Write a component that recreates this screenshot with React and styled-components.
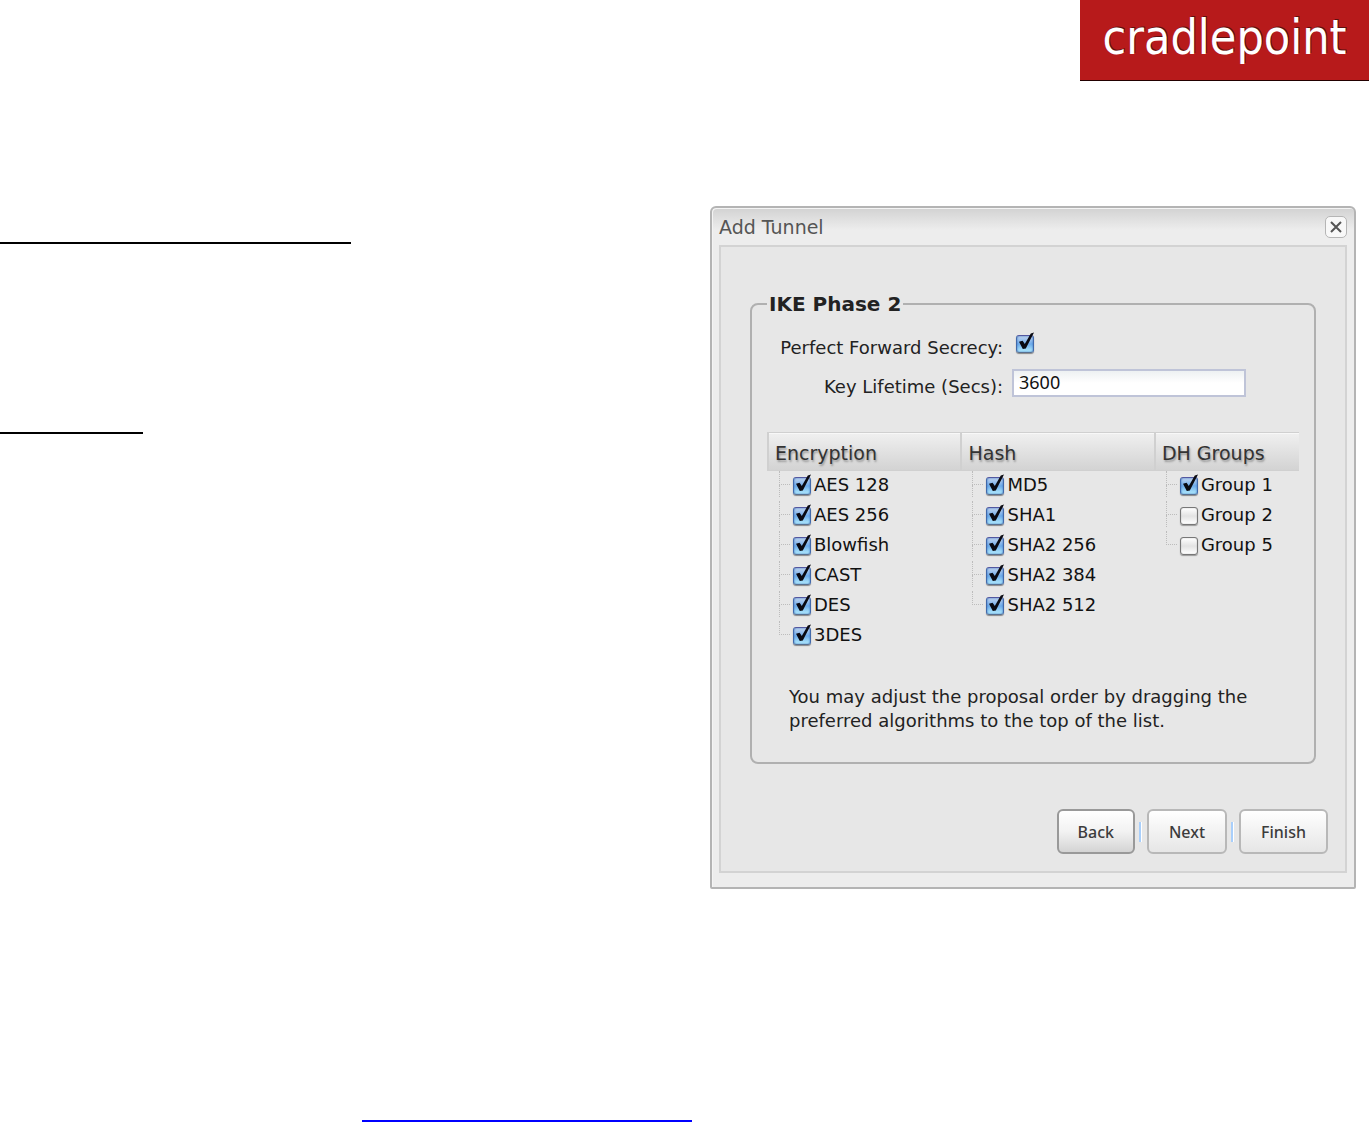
import React from "react"
import styled, { createGlobalStyle } from "styled-components"

const GlobalStyle = createGlobalStyle`
  *, *::before, *::after {
    box-sizing: border-box;
  }

  body {
    margin: 0;
    background: #fff;
    font-family: "DejaVu Sans", Verdana, sans-serif;
    font-size: 18px;
    line-height: 24px;
    color: #222;
  }
`

const Page = styled.div`
  display: flex;
  flex-direction: column;
  min-height: 100vh;
`

const Header = styled.header`
  display: flex;
  justify-content: flex-end;
`

const Logo = styled.div`
  width: 289px;
  height: 81px;
  border-bottom: 1px solid #200;
  background: #b71a1b;
  color: #fff;
  font-family: "DejaVu Sans Condensed", "DejaVu Sans", sans-serif;
  font-stretch: condensed;
  font-size: 48px;
  line-height: 74px;
  text-align: center;
  text-shadow: 1px -1px 0 #5c1010;
`

const Main = styled.main`
  display: grid;
  grid-template-columns: 1fr minmax(0, 646px);
  align-items: start;
  padding: 125px 13px 0 0;
`

const Outline = styled.div`
  display: flex;
  flex-direction: column;
  gap: 188px;
  padding-top: 36px;
`

const Rule = styled.div`
  width: ${(p) => p.$width};
  height: 2px;
  background: #000;
`

const Footer = styled.footer`
  display: flex;
  margin-top: auto;
  padding-left: 362px;
`

const FooterLink = styled.a`
  width: 330px;
  border-bottom: 2px solid #00f;
`

const Dialog = styled.section`
  padding: 0 7px 14px;
  border: 2px solid #b4b4b4;
  border-radius: 6px 6px 2px 2px;
  background: linear-gradient(#d2d2d2, #ededed 22px);
  box-shadow: inset 1px 1px 0 #f4f4f4;
`

const TitleBar = styled.div`
  display: flex;
  align-items: center;
  justify-content: space-between;
  height: 37px;

  h1 {
    margin: 0;
    font-size: 19px;
    font-weight: 400;
    color: #555;
  }
`

const CloseButton = styled.button`
  display: flex;
  align-items: center;
  justify-content: center;
  width: 22px;
  height: 22px;
  padding: 0;
  border: 1px solid #b5b5b5;
  border-radius: 5px;
  background: #f8f8f8;
`

const Panel = styled.form`
  padding: 46px 29px 17px;
  border: 2px solid #d3d3d3;
  background: #e7e7e7;
`

const Group = styled.fieldset`
  min-width: 0;
  margin: 0;
  padding: 13px 15px 29px;
  border: 2px solid #b0b0b0;
  border-radius: 8px;

  legend {
    padding: 0 2px;
    font-size: 20px;
    font-weight: 700;
    line-height: 22px;
  }
`

const Field = styled.div`
  display: grid;
  grid-template-columns: 236px 234px;
  column-gap: 9px;
  align-items: center;
  height: 39px;

  label {
    text-align: right;
    white-space: nowrap;
  }
`

const Control = styled.div`
  display: flex;
  padding: 0 0 8px ${(p) => p.$indent || "0"};
`

const TextInput = styled.input`
  width: 100%;
  height: 28px;
  padding: 0 5px 2px;
  border: 2px solid #bfc4d8;
  background: linear-gradient(#edf1f2, #fff 12px);
  color: #111;
  font-family: "Noto Sans", sans-serif;
  font-size: 18px;
`

const Columns = styled.div`
  display: grid;
  grid-template-columns: 4fr 4fr 3fr;
  margin-top: 26px;
`

const Column = styled.section`
  h2 {
    height: 39px;
    margin: 0;
    padding: 0 6px;
    border: solid #d0d0d0;
    border-width: 1px 0 1px 2px;
    background: linear-gradient(#f0f0f0, #d3d3d3);
    box-shadow: inset 0 1px 0 #f8f8f8;
    font-size: 19px;
    font-weight: 400;
    line-height: 41px;
    color: #333;
    text-shadow: 1px 2px 2px #999;
  }

  ul {
    margin: 0;
    padding: 0 0 0 12px;
    list-style: none;
  }
`

const Item = styled.li`
  display: flex;
  align-items: center;
  height: 30px;
  color: #111;

  label {
    padding: 0 0 2px 3px;
    white-space: nowrap;
  }
`

const Branch = styled.span`
  align-self: flex-start;
  width: 14px;
  height: 26px;

  &::before {
    content: "";
    display: block;
    width: 11px;
    height: 14px;
    border: dotted #bcbcbc;
    border-width: 0 0 1px 1px;
  }

  &::after {
    content: "";
    display: ${(p) => (p.$last ? "none" : "block")};
    height: 12px;
    border-left: 1px dotted #bcbcbc;
  }
`

const CheckWrap = styled.span`
  display: inline-grid;
  width: 18px;
  height: 18px;

  input,
  svg {
    grid-area: 1 / 1;
  }

  input {
    appearance: none;
    width: 18px;
    height: 18px;
    margin: 0;
    border: 1px solid #777;
    border-radius: 3px;
    background: linear-gradient(#fff, #e3e3e3 50%, #fff);
    box-shadow: 0 1px 1px #999, inset 0 0 1px #777;
  }

  input:checked {
    border-color: #5358a0 #4169aa #5a7090;
    background: linear-gradient(#c3d5ef, #6eabea 50%, #b6efff);
    box-shadow: 0 1px 1px #888, inset 0 0 2px #2b62b8;
  }

  svg {
    display: none;
    overflow: visible;
    pointer-events: none;
  }

  input:checked + svg {
    display: block;
  }
`

const Note = styled.p`
  margin: 34px 0 0;
  padding-left: 22px;
`

const Actions = styled.div`
  display: flex;
  align-items: center;
  justify-content: flex-end;
  margin: 45px -12px 0 0;
`

const Button = styled.button`
  height: 45px;
  padding: 0 ${(p) => (p.$active ? "19px" : "20px")};
  border: 2px solid ${(p) => (p.$active ? "#999" : "#b8b8b8")};
  border-radius: 6px;
  background: linear-gradient(#fff, #f2f2f2 50%, ${(p) => (p.$active ? "#d4d4d4" : "#e6e6e6")});
  color: #3c3c3c;
  font-family: "Noto Sans", sans-serif;
  font-size: 16px;
  font-weight: 500;
`

const Separator = styled.span`
  width: 3px;
  height: 20px;
  margin: 0 5px 0 4px;
  border-left: 2px solid #a9cffb;
  border-right: 1px solid #fff;
`

const lists = [
  {
    title: "Encryption",
    items: ["AES 128", "AES 256", "Blowfish", "CAST", "DES", "3DES"],
    checked: 6,
  },
  {
    title: "Hash",
    items: ["MD5", "SHA1", "SHA2 256", "SHA2 384", "SHA2 512"],
    checked: 5,
  },
  {
    title: "DH Groups",
    items: ["Group 1", "Group 2", "Group 5"],
    checked: 1,
  },
]

const Checkbox = ({ id, checked }) => (
  <CheckWrap>
    <input type="checkbox" id={id} defaultChecked={checked} />
    <svg width="18" height="18" viewBox="0 0 18 18" aria-hidden="true">
      <path
        d="M3 6.8 L6.6 5.8 L8.8 9 L14.8 -1.6 L18 -2.4 L9.8 13.4 L6.8 14 Z"
        fill="#0a0a12"
      />
    </svg>
  </CheckWrap>
)

export default function App() {
  return (
    <Page>
      <GlobalStyle />
      <Header>
        <Logo>cradlepoint</Logo>
      </Header>
      <Main>
        <Outline>
          <Rule $width="351px" />
          <Rule $width="143px" />
        </Outline>
        <Dialog role="dialog" aria-labelledby="dialog-title">
          <TitleBar>
            <h1 id="dialog-title">Add Tunnel</h1>
            <CloseButton type="button" aria-label="Close">
              <svg width="12" height="12" viewBox="0 0 12 12">
                <path d="M1 1 L11 11 M11 1 L1 11" stroke="#555" strokeWidth="2" />
              </svg>
            </CloseButton>
          </TitleBar>
          <Panel onSubmit={(e) => e.preventDefault()}>
            <Group>
              <legend>IKE Phase 2</legend>
              <Field>
                <label htmlFor="pfs">Perfect Forward Secrecy:</label>
                <Control $indent="4px">
                  <Checkbox id="pfs" checked />
                </Control>
              </Field>
              <Field>
                <label htmlFor="lifetime">Key Lifetime (Secs):</label>
                <Control>
                  <TextInput id="lifetime" type="text" defaultValue="3600" />
                </Control>
              </Field>
              <Columns>
                {lists.map(({ title, items, checked }) => (
                  <Column key={title}>
                    <h2>{title}</h2>
                    <ul>
                      {items.map((item, i) => (
                        <Item key={item}>
                          <Branch $last={i === items.length - 1} />
                          <Checkbox id={item} checked={i < checked} />
                          <label htmlFor={item}>{item}</label>
                        </Item>
                      ))}
                    </ul>
                  </Column>
                ))}
              </Columns>
              <Note>
                You may adjust the proposal order by dragging the
                <br />
                preferred algorithms to the top of the list.
              </Note>
            </Group>
            <Actions>
              <Button type="button" $active>
                Back
              </Button>
              <Separator />
              <Button type="button">Next</Button>
              <Separator />
              <Button type="submit">Finish</Button>
            </Actions>
          </Panel>
        </Dialog>
      </Main>
      <Footer>
        <FooterLink href="#more" aria-label="More information" />
      </Footer>
    </Page>
  )
}
